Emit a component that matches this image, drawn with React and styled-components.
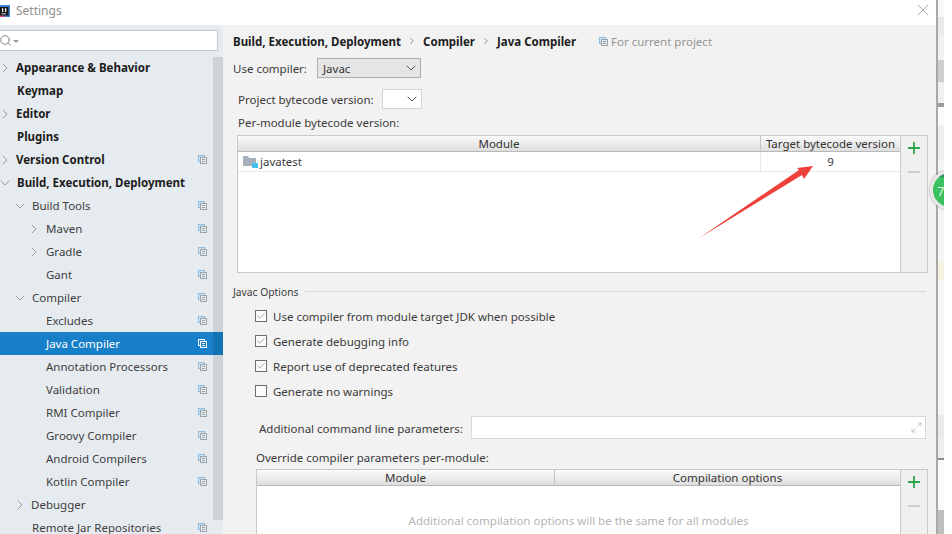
import React from 'react'
import styled, {createGlobalStyle} from 'styled-components'
import {ChevronRight, ChevronDown, X, Check, Plus, Minus, Search} from 'lucide-react'

const GlobalStyle = createGlobalStyle`
  html, body {
    margin: 0;
    height: 100%;
    background: #fff;
    overflow: hidden;
  }
  body {
    font-family: "Noto Sans", "Liberation Sans", sans-serif;
    font-size: 11.5px;
    color: #3a3a3a;
  }
`

const Page = styled.div`
  display: flex;
  width: 944px;
  height: 534px;
  overflow: hidden;
  position: relative;
`
const Dialog = styled.div`
  width: 936px;
  flex: none;
  display: flex;
  flex-direction: column;
  border-right: 2px solid #a9a9a9;
`
const TitleBar = styled.div`
  height: 25px;
  flex: none;
  display: flex;
  align-items: center;
  background: #fff;
  padding-right: 3px;
  color: #8f8f8f;
  font-size: 12px;
`
const TitleText = styled.span`
  flex: 1;
  margin-left: 6px;
  margin-top: -4px;
`
const CloseButton = styled(X)`
  margin-top: -5px;
  color: #999;
`
const Body = styled.div`
  flex: 1;
  display: flex;
  min-height: 0;
`
const Sidebar = styled.div`
  width: 223px;
  flex: none;
  background: #e6ebf0;
  position: relative;
  overflow: hidden;
`
const SearchBox = styled.div`
  height: 19px;
  width: 217px;
  margin: 5px 0;
  background: #fff;
  border: 1px solid #c8c8c8;
  border-left: 0;
  display: flex;
  align-items: center;
  color: #777;
`
const SearchIcon = styled(Search)`
  margin-left: -1px;
`
const SearchCaret = styled.span`
  width: 0;
  height: 0;
  margin-left: 1px;
  margin-top: 1px;
  border-left: 3px solid transparent;
  border-right: 3px solid transparent;
  border-top: 3px solid #999;
`
const Scrollbar = styled.div`
  position: absolute;
  top: 32px;
  right: 0;
  width: 10px;
  height: 463px;
  background: rgba(0, 0, 0, 0.1);
`
const Row = styled.div`
  height: 23.025px;
  display: flex;
  align-items: center;
  padding-left: ${p => p.$indent}px;
  padding-right: 16px;
  font-weight: ${p => (p.$bold ? 700 : 400)};
  color: ${p => (p.$selected ? '#fff' : p.$bold ? '#1c1c1c' : '#404040')};
  background: ${p => (p.$selected ? '#1780c8' : 'transparent')};
  white-space: nowrap;
`
const RowLabel = styled.span`
  flex: 1;
  margin-left: ${p => p.$offset}px;
`
const ToggleSlot = styled.span`
  width: 10px;
  flex: none;
  display: flex;
  justify-content: center;
  color: #8e8e8e;
  svg {
    flex: none;
  }
`
const Main = styled.div`
  flex: 1;
  min-width: 0;
  background: #f2f2f2;
  padding-left: 10px;
  overflow: hidden;
`
const Breadcrumb = styled.div`
  height: 32px;
  display: flex;
  align-items: center;
  font-weight: 700;
  color: #1c1c1c;
`
const CrumbArrow = styled(ChevronRight)`
  margin: 0 6px;
  color: #777;
`
const ScopeNote = styled.span`
  display: flex;
  align-items: center;
  gap: 3px;
  margin-left: 23px;
  font-weight: 400;
  color: #949494;
`
const FormRow = styled.div`
  display: flex;
  align-items: center;
  height: 20px;
  margin-top: ${p => p.$top || 0}px;
  margin-left: ${p => p.$left || 0}px;
`
const Select = styled.div`
  height: 20px;
  box-sizing: border-box;
  width: ${p => p.$width}px;
  margin-left: ${p => p.$gap}px;
  padding: 0 1px 0 5px;
  display: flex;
  align-items: center;
  justify-content: space-between;
  background: ${p => (p.$filled ? '#e5e5e5' : '#fff')};
  border: 1px solid ${p => (p.$filled ? '#adadad' : '#d4d4d4')};
  color: #333;
`
const Table = styled.div`
  display: flex;
  box-sizing: border-box;
  width: ${p => p.$width}px;
  height: ${p => p.$height}px;
  margin-left: ${p => p.$left}px;
  margin-top: ${p => p.$top}px;
  border: 1px solid #c8c8c8;
  position: relative;
`
const TableBody = styled.div`
  flex: 1;
  min-width: 0;
  background: #fff;
`
const TableHeader = styled.div`
  display: grid;
  grid-template-columns: ${p => p.$columns};
  height: 15px;
  line-height: 16px;
  background: linear-gradient(#fafafa, #dedede);
  border-bottom: 1px solid #b9b9b9;
  color: #333;
  text-align: center;
`
const HeaderCell = styled.div`
  border-left: ${p => (p.$divider ? '1px solid #c4c4c4' : '0')};
  white-space: nowrap;
`
const TableRow = styled.div`
  display: grid;
  grid-template-columns: ${p => p.$columns};
  height: 19px;
  line-height: 19px;
  border-bottom: 1px solid #e8e8e8;
`
const ModuleCell = styled.div`
  display: flex;
  align-items: center;
  gap: 2px;
  padding-left: 5px;
`
const ValueCell = styled.div`
  border-left: 1px solid #e8e8e8;
  text-align: center;
`
const TableTools = styled.div`
  width: 26px;
  flex: none;
  border-left: 1px solid #c8c8c8;
  background: #f0f0f0;
  display: flex;
  flex-direction: column;
  align-items: center;
  padding-top: 3px;
  gap: 6px;
`
const AddIcon = styled(Plus)`
  color: #2aa34a;
`
const RemoveIcon = styled(Minus)`
  color: #c0c0c0;
`
const ArrowOverlay = styled.svg`
  position: absolute;
  left: 460px;
  top: 29px;
`
const GroupTitle = styled.div`
  display: flex;
  align-items: center;
  gap: 6px;
  margin-top: 10px;
  height: 18px;
  padding-right: 10px;
  font-size: 10.3px;
`
const GroupLine = styled.div`
  flex: 1;
  height: 1px;
  margin-top: -2px;
  background: #d6d6d6;
`
const CheckList = styled.div`
  display: flex;
  flex-direction: column;
  gap: 5px;
  margin: 5px 0 0 22px;
`
const CheckRow = styled.div`
  display: flex;
  align-items: center;
  gap: 6px;
  height: 20px;
`
const CheckBox = styled.span`
  width: 10px;
  height: 10px;
  background: #fbfbfb;
  border: 1px solid #6e6e6e;
  display: flex;
  align-items: center;
  justify-content: center;
  color: #777;
`
const ParamRow = styled.div`
  display: flex;
  align-items: center;
  margin: 15px 10px 0 26px;
  height: 23px;
`
const ParamLabel = styled.span`
  margin-top: 1px;
`
const ParamInput = styled.div`
  flex: 1;
  height: 21px;
  margin-left: 8px;
  background: #fff;
  border: 1px solid #d8d8d8;
  display: flex;
  align-items: center;
  justify-content: flex-end;
  padding-right: 3px;
`
const EmptyText = styled.div`
  text-align: center;
  margin-top: 27px;
  color: #b5b5b5;
`
const Strip = styled.div`
  flex: 1;
  display: flex;
  flex-direction: column;
`
const Band = styled.div`
  height: ${p => p.$h}px;
  flex: none;
  background: ${p => p.$c};
`
const Badge = styled.div`
  position: absolute;
  left: 930px;
  top: 170px;
  width: 40px;
  height: 40px;
  border-radius: 50%;
  border: 3px solid #e9e9e9;
  box-shadow: 0 0 2px #777;
  background: linear-gradient(#2f8f5a 0 12%, #3cc060 14% 100%);
  color: #dff5e4;
  font-size: 13px;
  line-height: 36px;
  padding-left: 4px;
  box-sizing: border-box;
`

const AppLogo = () => (
  <svg width="10" height="12" viewBox="0 0 10 12" style={{marginTop: -4, flex: 'none'}}>
    <rect width="10" height="12" fill="#3f7fd6" />
    <path d="M0 6 5 12H0z" fill="#e0457b" />
    <rect x="0" y="2" width="8.5" height="8.5" fill="#161616" />
    <rect x="1.5" y="8.3" width="4.5" height="1" fill="#ddd" />
    <rect x="2" y="3.2" width="1.3" height="3.8" fill="#eee" />
    <rect x="5" y="3.2" width="1.3" height="3.8" fill="#eee" />
  </svg>
)

const ScopeIcon = ({light}) => (
  <svg width="9" height="9" viewBox="0 0 9 9" style={{flex: 'none'}}>
    <rect x="0.5" y="0.5" width="6" height="6" fill={light ? 'none' : '#cfe3f3'} stroke={light ? '#fff' : '#8fbcdc'} />
    <rect x="2.5" y="2.5" width="6" height="6" fill={light ? '#1780c8' : '#e6ebf0'} stroke={light ? '#fff' : '#9aa3aa'} />
    <path d="M4 4.5h3M4 6.5h3" stroke={light ? '#fff' : '#9aa3aa'} />
  </svg>
)

const FolderIcon = () => (
  <svg width="15" height="12" viewBox="0 0 15 12" style={{flex: 'none'}}>
    <path d="M0 0h5l1 2h7v8H0z" fill="#a5b0ba" />
    <rect x="9" y="7" width="6" height="5" fill="#45bdea" />
  </svg>
)

const ExpandIcon = () => (
  <svg width="11" height="11" viewBox="0 0 11 11" fill="none" stroke="#c4c4c4">
    <path d="M6.5 4.5 10 1M7 1h3v3M4.5 6.5 1 10M1 7v3h3" />
  </svg>
)

const treeRows = [
  {label: 'Appearance & Behavior', bold: true, toggle: 'closed', level: 0},
  {label: 'Keymap', bold: true, level: 0},
  {label: 'Editor', bold: true, toggle: 'closed', level: 0},
  {label: 'Plugins', bold: true, level: 0},
  {label: 'Version Control', bold: true, toggle: 'closed', level: 0, scoped: true},
  {label: 'Build, Execution, Deployment', bold: true, toggle: 'open', level: 0},
  {label: 'Build Tools', toggle: 'open', level: 1, scoped: true},
  {label: 'Maven', toggle: 'closed', level: 2, scoped: true},
  {label: 'Gradle', toggle: 'closed', level: 2, scoped: true},
  {label: 'Gant', level: 2, scoped: true},
  {label: 'Compiler', toggle: 'open', level: 1, scoped: true},
  {label: 'Excludes', level: 2, scoped: true},
  {label: 'Java Compiler', level: 2, scoped: true, selected: true},
  {label: 'Annotation Processors', level: 2, scoped: true},
  {label: 'Validation', level: 2, scoped: true},
  {label: 'RMI Compiler', level: 2, scoped: true},
  {label: 'Groovy Compiler', level: 2, scoped: true},
  {label: 'Android Compilers', level: 2, scoped: true},
  {label: 'Kotlin Compiler', level: 2, scoped: true},
  {label: 'Debugger', toggle: 'closed', level: 1},
  {label: 'Remote Jar Repositories', level: 1, scoped: true},
]

const checks = [
  {label: 'Use compiler from module target JDK when possible', on: true},
  {label: 'Generate debugging info', on: true},
  {label: 'Report use of deprecated features', on: true},
  {label: 'Generate no warnings', on: false},
]

const bands = [
  [17, '#f8f8f8'], [18, '#e9e9e9'], [25, '#f1f1f1'], [22, '#cfcfcf'], [21, '#f0f0f0'], [4, '#9d9d9d'],
  [18, '#fbfbfb'], [35, '#eeeeee'], [102, '#f5f5f5'], [18, '#f5f2e0'], [135, '#f6f6f6'], [22, '#e9e9e9'],
  [21, '#eeeeee'], [2, '#8c8c8c'], [50, '#fbfbfb'], [24, '#bfbfbf'],
]

const TreeRow = ({row}) => {
  const toggleLeft = [0, 15, 29][row.level]
  const labelGap = row.toggle === 'closed' && row.level < 2 ? 6 : 7
  return (
    <Row $indent={toggleLeft} $bold={row.bold} $selected={row.selected}>
      <ToggleSlot>
        {row.toggle === 'closed' && <ChevronRight size={16} strokeWidth={1.3} />}
        {row.toggle === 'open' && <ChevronDown size={16} strokeWidth={1.3} />}
      </ToggleSlot>
      <RowLabel $offset={labelGap}>{row.label}</RowLabel>
      {row.scoped && <ScopeIcon light={row.selected} />}
    </Row>
  )
}

export default function App() {
  return (
    <Page>
      <GlobalStyle />
      <Dialog>
        <TitleBar>
          <AppLogo />
          <TitleText>Settings</TitleText>
          <CloseButton size={20} strokeWidth={1} />
        </TitleBar>
        <Body>
          <Sidebar>
            <SearchBox>
              <SearchIcon size={13} strokeWidth={1.6} />
              <SearchCaret />
            </SearchBox>
            {treeRows.map(row => <TreeRow key={row.label} row={row} />)}
            <Scrollbar />
          </Sidebar>
          <Main>
            <Breadcrumb>
              Build, Execution, Deployment
              <CrumbArrow size={10} strokeWidth={2} />
              Compiler
              <CrumbArrow size={10} strokeWidth={2} />
              Java Compiler
              <ScopeNote><ScopeIcon />For current project</ScopeNote>
            </Breadcrumb>
            <FormRow $top={1}>
              Use compiler:
              <Select $width={104} $gap={10} $filled>
                Javac
                <ChevronDown size={16} strokeWidth={1.2} />
              </Select>
            </FormRow>
            <FormRow $top={11} $left={5}>
              Project bytecode version:
              <Select $width={40} $gap={8}>
                <span />
                <ChevronDown size={16} strokeWidth={1.2} />
              </Select>
            </FormRow>
            <FormRow $top={3} $left={5}>Per-module bytecode version:</FormRow>
            <Table $width={691} $height={138} $left={4} $top={3}>
              <TableBody>
                <TableHeader $columns="522px 1fr">
                  <HeaderCell>Module</HeaderCell>
                  <HeaderCell $divider>Target bytecode version</HeaderCell>
                </TableHeader>
                <TableRow $columns="522px 1fr">
                  <ModuleCell><FolderIcon />javatest</ModuleCell>
                  <ValueCell>9</ValueCell>
                </TableRow>
              </TableBody>
              <TableTools>
                <AddIcon size={18} strokeWidth={2.4} />
                <RemoveIcon size={18} strokeWidth={1.8} />
              </TableTools>
              <ArrowOverlay width="118" height="76" viewBox="0 0 118 76">
                <path d="M0.5 73.5 101 5 99 3 115 1 106 14 104 10Z" fill="#f0403c" />
              </ArrowOverlay>
            </Table>
            <GroupTitle>
              Javac Options
              <GroupLine />
            </GroupTitle>
            <CheckList>
              {checks.map(check => (
                <CheckRow key={check.label}>
                  <CheckBox>{check.on && <Check size={10} strokeWidth={1.5} />}</CheckBox>
                  {check.label}
                </CheckRow>
              ))}
            </CheckList>
            <ParamRow>
              <ParamLabel>Additional command line parameters:</ParamLabel>
              <ParamInput><ExpandIcon /></ParamInput>
            </ParamRow>
            <FormRow $top={8} $left={23}>Override compiler parameters per-module:</FormRow>
            <Table $width={672} $height={80} $left={23} $top={2}>
              <TableBody>
                <TableHeader $columns="297px 1fr">
                  <HeaderCell>Module</HeaderCell>
                  <HeaderCell $divider>Compilation options</HeaderCell>
                </TableHeader>
                <EmptyText>Additional compilation options will be the same for all modules</EmptyText>
              </TableBody>
              <TableTools>
                <AddIcon size={18} strokeWidth={2.4} />
                <RemoveIcon size={18} strokeWidth={1.8} />
              </TableTools>
            </Table>
          </Main>
        </Body>
      </Dialog>
      <Strip>
        {bands.map(([h, c], i) => <Band key={i} $h={h} $c={c} />)}
      </Strip>
      <Badge>7</Badge>
    </Page>
  )
}
